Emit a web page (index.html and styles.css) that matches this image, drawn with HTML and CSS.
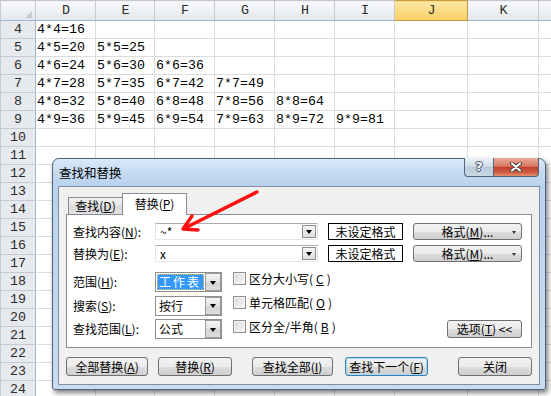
FILE: index.html
```html
<!DOCTYPE html>
<html lang="zh-CN">

<head>
  <meta charset="utf-8">
  <title>查找和替换</title>
  <link rel="stylesheet" href="styles.css">
</head>

<body>
  <table class="sheet">
    <colgroup>
      <col class="w35">
      <col class="w60">
      <col class="w59">
      <col class="w60">
      <col class="w60">
      <col class="w60">
      <col class="w60">
      <col class="w73">
      <col class="w71">
      <col class="w13">
    </colgroup>
    <thead>
      <tr>
        <th class="corner"><svg width="7" height="7" viewBox="0 0 7 7"><path d="M7 0 L7 7 L0 7 Z" fill="#c3c9d1"/></svg></th>
        <th>D</th><th>E</th><th>F</th><th>G</th><th>H</th><th>I</th><th class="sel">J</th><th>K</th><th></th>
      </tr>
    </thead>
    <tbody>
      <tr><th>4</th><td>4*4=16</td><td></td><td></td><td></td><td></td><td></td><td></td><td></td><td></td></tr>
      <tr><th>5</th><td>4*5=20</td><td>5*5=25</td><td></td><td></td><td></td><td></td><td></td><td></td><td></td></tr>
      <tr><th>6</th><td>4*6=24</td><td>5*6=30</td><td>6*6=36</td><td></td><td></td><td></td><td></td><td></td><td></td></tr>
      <tr><th>7</th><td>4*7=28</td><td>5*7=35</td><td>6*7=42</td><td>7*7=49</td><td></td><td></td><td></td><td></td><td></td></tr>
      <tr><th>8</th><td>4*8=32</td><td>5*8=40</td><td>6*8=48</td><td>7*8=56</td><td>8*8=64</td><td></td><td></td><td></td><td></td></tr>
      <tr><th>9</th><td>4*9=36</td><td>5*9=45</td><td>6*9=54</td><td>7*9=63</td><td>8*9=72</td><td>9*9=81</td><td></td><td></td><td></td></tr>
      <tr><th>10</th><td></td><td></td><td></td><td></td><td></td><td></td><td></td><td></td><td></td></tr>
      <tr><th>11</th><td></td><td></td><td></td><td></td><td></td><td></td><td></td><td></td><td></td></tr>
      <tr><th>12</th><td></td><td></td><td></td><td></td><td></td><td></td><td></td><td></td><td></td></tr>
      <tr><th>13</th><td></td><td></td><td></td><td></td><td></td><td></td><td></td><td></td><td></td></tr>
      <tr><th>14</th><td></td><td></td><td></td><td></td><td></td><td></td><td></td><td></td><td></td></tr>
      <tr><th>15</th><td></td><td></td><td></td><td></td><td></td><td></td><td></td><td></td><td></td></tr>
      <tr><th>16</th><td></td><td></td><td></td><td></td><td></td><td></td><td></td><td></td><td></td></tr>
      <tr><th>17</th><td></td><td></td><td></td><td></td><td></td><td></td><td></td><td></td><td></td></tr>
      <tr><th>18</th><td></td><td></td><td></td><td></td><td></td><td></td><td></td><td></td><td></td></tr>
      <tr><th>19</th><td></td><td></td><td></td><td></td><td></td><td></td><td></td><td></td><td></td></tr>
      <tr><th>20</th><td></td><td></td><td></td><td></td><td></td><td></td><td></td><td></td><td></td></tr>
      <tr><th>21</th><td></td><td></td><td></td><td></td><td></td><td></td><td></td><td></td><td></td></tr>
      <tr><th>22</th><td></td><td></td><td></td><td></td><td></td><td></td><td></td><td></td><td></td></tr>
      <tr><th>23</th><td></td><td></td><td></td><td></td><td></td><td></td><td></td><td></td><td></td></tr>
      <tr><th>24</th><td></td><td></td><td></td><td></td><td></td><td></td><td></td><td></td><td></td></tr>
    </tbody>
  </table>

  <div class="dialog">
    <div class="titlebar">
      <span class="title">查找和替换</span>
      <div class="caption-btns">
        <span class="cap-help">?</span>
        <span class="cap-close">
          <svg width="14" height="10" viewBox="0 0 14 10">
            <path d="M3 1.5 L11 8.5 M11 1.5 L3 8.5" stroke="#3b3b3b" stroke-width="4" stroke-linecap="round"/>
            <path d="M3 1.5 L11 8.5 M11 1.5 L3 8.5" stroke="#fff" stroke-width="2.2" stroke-linecap="round"/>
          </svg>
        </span>
      </div>
    </div>

    <div class="client">
      <div class="tabs">
        <span class="tab">查找(<u>D</u>)</span>
        <span class="tab active">替换(<u>P</u>)</span>
      </div>

      <div class="panel">
        <div class="field-row">
          <label class="field-label">查找内容(<u>N</u>):</label>
          <div class="combo"><span class="combo-text">~*</span><span class="drop"></span></div>
          <span class="fmt-box">未设定格式</span>
          <span class="btn fmt-btn">格式(<u>M</u>)...</span>
        </div>
        <div class="field-row">
          <label class="field-label">替换为(<u>E</u>):</label>
          <div class="combo"><span class="combo-text">x</span><span class="drop"></span></div>
          <span class="fmt-box">未设定格式</span>
          <span class="btn fmt-btn">格式(<u>M</u>)...</span>
        </div>

        <div class="options">
          <div class="opt-selects">
            <div class="opt-row">
              <label class="field-label">范围(<u>H</u>):</label>
              <div class="select"><span class="select-text picked">工作表</span><span class="drop big"></span></div>
            </div>
            <div class="opt-row">
              <label class="field-label">搜索(<u>S</u>):</label>
              <div class="select"><span class="select-text">按行</span><span class="drop big"></span></div>
            </div>
            <div class="opt-row">
              <label class="field-label">查找范围(<u>L</u>):</label>
              <div class="select"><span class="select-text">公式</span><span class="drop big"></span></div>
            </div>
          </div>
          <div class="opt-checks">
            <label class="check"><span class="box"></span>区分大小写(<u>C</u>)</label>
            <label class="check"><span class="box"></span>单元格匹配(<u>O</u>)</label>
            <label class="check"><span class="box"></span>区分全/半角(<u>B</u>)</label>
          </div>
          <span class="btn opt-btn">选项(<u>T</u>) &lt;&lt;</span>
        </div>
      </div>

      <div class="actions">
        <span class="btn b-all">全部替换(<u>A</u>)</span>
        <span class="btn b-replace">替换(<u>R</u>)</span>
        <span class="btn b-findall">查找全部(<u>I</u>)</span>
        <span class="btn b-next default">查找下一个(<u>F</u>)</span>
        <span class="btn b-close">关闭</span>
      </div>
    </div>
  </div>

  <svg class="arrow" width="551" height="396" viewBox="0 0 551 396">
    <g stroke="#ff1010" stroke-width="3.4" stroke-linecap="round" stroke-linejoin="round" fill="none">
      <path d="M257 192 L185 228"/>
      <path d="M192 216 L183 229 L198 230"/>
    </g>
  </svg>
</body>

</html>
```

FILE: styles.css
```css
body {
  margin: 0;
  width: 551px;
  height: 396px;
  overflow: hidden;
  position: relative;
  background-color: #fff;
  font-family: "Liberation Mono", monospace;
}

/* spreadsheet */

.sheet {
  border-collapse: collapse;
  table-layout: fixed;
  width: 551px;
  font-size: 13.3px;
  color: #000;
}

.w13 { width: 13px; }
.w35 { width: 35px; }
.w59 { width: 59px; }
.w60 { width: 60px; }
.w71 { width: 71px; }
.w73 { width: 73px; }

.sheet tr {
  height: 18px;
}

.sheet thead tr {
  height: 20px;
}

.sheet td,
.sheet th {
  border: 1px solid #dadcdd;
  padding: 0 0 0 1px;
  white-space: nowrap;
  overflow: hidden;
  text-align: left;
  font-weight: normal;
  line-height: 16px;
}

.sheet thead th {
  background: linear-gradient(#f9fafb, #e3e6ea);
  border-color: #c6cad0;
  border-bottom-color: #9eb6ce;
  text-align: center;
  color: #2b2b2b;
}

.sheet thead th.sel {
  background: linear-gradient(#fde8a6, #f8cf64);
  border-color: #c69a3f;
  color: #2b2b2b;
}

.sheet .corner {
  text-align: right;
  vertical-align: bottom;
  padding: 0 3px 2px 0;
}

.corner svg {
  display: block;
  margin-left: auto;
}

.sheet tbody th {
  background: #e6e9ee;
  border-color: #c6cad0;
  border-right-color: #9eb6ce;
  text-align: center;
  color: #2b2b2b;
  padding: 0;
}

/* dialog */

.dialog {
  position: absolute;
  left: 52px;
  top: 158px;
  width: 494px;
  height: 232px;
  box-sizing: border-box;
  border: 1px solid #51627a;
  border-radius: 7px 7px 3px 3px;
  background: linear-gradient(#dbe9f8 0, #c4daf1 14px, #b9d2ed 27px, #cadcf0 100%);
  box-shadow: 2px 3px 5px rgba(0, 0, 0, 0.5);
  font-family: "Noto Sans CJK SC", sans-serif;
  font-size: 12px;
  line-height: 14px;
  color: #000;
}

.dialog u {
  text-decoration: underline;
}

.titlebar {
  height: 27px;
  display: flex;
  align-items: flex-start;
}

.title {
  padding: 7px 0 0 6px;
  font-size: 12.5px;
}

.caption-btns {
  margin: -1px 6px 0 auto;
  display: flex;
}

.cap-help,
.cap-close {
  height: 19px;
  box-sizing: border-box;
  border: 1px solid #4f6580;
  border-top: none;
  display: flex;
  align-items: center;
  justify-content: center;
}

.cap-help {
  width: 29px;
  border-right: none;
  border-radius: 0 0 0 4px;
  background: linear-gradient(#eaf0f7, #d3deea 45%, #bccbdc 50%, #c9d7e6);
  font-family: "DejaVu Sans", sans-serif;
  font-weight: bold;
  font-size: 13px;
  color: #f7f9fb;
  text-shadow: 1px 0 0 #3d4c60, -1px 0 0 #3d4c60, 0 1px 0 #3d4c60, 0 -1px 0 #3d4c60;
}

.cap-close {
  width: 46px;
  border-radius: 0 0 4px 0;
  background: linear-gradient(#eaa898, #d97a66 45%, #c5412d 52%, #cf5a43 80%, #e3906f);
}

.client {
  margin: 0 5px;
  height: 199px;
  box-sizing: border-box;
  border: 1px solid #7f8ea3;
  background-color: #f0f0f0;
}

.tabs {
  height: 21px;
  padding: 6px 0 0 9px;
  display: flex;
  align-items: flex-end;
}

.tab {
  width: 55px;
  height: 17px;
  box-sizing: border-box;
  border: 1px solid #898c95;
  border-bottom: none;
  background: linear-gradient(#f3f3f3, #e3e3e3 50%, #d9d9d9 50%, #e4e4e4);
  display: flex;
  align-items: center;
  justify-content: center;
}

.tab.active {
  width: 65px;
  height: 22px;
  margin: 0 0 -1px -1px;
  background: #fff;
  position: relative;
  padding-bottom: 2px;
}

.panel {
  width: 466px;
  height: 134px;
  margin-left: 7px;
  box-sizing: border-box;
  border: 1px solid #898c95;
  background-color: #fff;
  padding: 8px 0 0 6px;
}

.field-row {
  display: flex;
  align-items: center;
  height: 17px;
}

.field-row + .field-row {
  margin-top: 5px;
}

.field-label {
  width: 82px;
  flex: none;
}

.combo {
  width: 163px;
  height: 17px;
  box-sizing: border-box;
  border: 1px solid #abadb3;
  border-color: #abadb3 #dbdfe6 #e3e9ef #e2e3ea;
  display: flex;
  align-items: center;
}

.combo-text {
  padding-left: 4px;
  flex: 1;
}

.drop {
  width: 14px;
  height: 13px;
  margin-right: 1px;
  box-sizing: border-box;
  border: 1px solid #8d8d8d;
  background: linear-gradient(#f6f6f6, #dedede);
  display: flex;
  align-items: center;
  justify-content: center;
}

.drop::before {
  content: "";
  border-top: 4px solid #000;
  border-left: 3.5px solid transparent;
  border-right: 3.5px solid transparent;
  margin-top: 1px;
}

.drop.big {
  width: 16px;
  height: 18px;
  margin-right: 0;
  border-color: #9a9a9a;
  background: linear-gradient(#f4f4f4, #e4e4e4 50%, #d5d5d5 50%, #dcdcdc);
}

.fmt-box {
  width: 75px;
  height: 17px;
  margin-left: 10px;
  box-sizing: border-box;
  border: 1px solid #000;
  display: flex;
  align-items: center;
  justify-content: center;
}

.btn {
  height: 19px;
  box-sizing: border-box;
  border: 1px solid #707070;
  border-radius: 3px;
  background: linear-gradient(#f2f2f2, #ebebeb 50%, #dddddd 50%, #cfcfcf);
  display: flex;
  align-items: center;
  justify-content: center;
  flex: none;
}

.fmt-btn {
  width: 109px;
  height: 17px;
  margin-left: 10px;
  position: relative;
}

.fmt-btn::after {
  content: "";
  position: absolute;
  right: 5px;
  top: 7px;
  border-top: 3px solid #333;
  border-left: 2px solid transparent;
  border-right: 2px solid transparent;
}

.options {
  margin-top: 10px;
  display: flex;
}

.opt-selects {
  display: flex;
  flex-direction: column;
  gap: 3.5px;
}

.opt-row {
  display: flex;
  align-items: center;
  height: 20px;
}

.select {
  width: 67px;
  height: 20px;
  box-sizing: border-box;
  border: 1px solid #8e8f8f;
  display: flex;
  align-items: center;
}

.select-text {
  flex: 1;
  margin: 0 1px;
  padding-left: 2px;
  height: 16px;
  line-height: 16px;
}

.select-text.picked {
  background-color: #3399ff;
  color: #fff;
  outline: 1px dotted #f3c56a;
  outline-offset: -1px;
  letter-spacing: 2px;
}

.opt-checks {
  margin-left: 11px;
  display: flex;
  flex-direction: column;
  gap: 11px;
}

.check {
  display: flex;
  align-items: center;
  height: 13px;
  gap: 3px;
}

.box {
  width: 13px;
  height: 13px;
  box-sizing: border-box;
  border: 1px solid #8e8f8f;
  background: linear-gradient(135deg, #d9d9d9, #f8f8f8);
  box-shadow: inset 0 0 0 1px #f4f4f4;
}

.opt-btn {
  width: 75px;
  height: 18px;
  margin: 0 9px 1px auto;
  align-self: flex-end;
}

.actions {
  display: flex;
  padding: 9px 0 0 7px;
}

.b-all { width: 82px; }
.b-replace { width: 74px; margin-left: 10px; }
.b-findall { width: 81px; margin-left: 20px; }
.b-next { width: 83px; margin-left: 12px; }
.b-close { width: 74px; margin-left: 30px; }

.btn.default {
  border-color: #3c7fb1;
  box-shadow: inset 0 0 0 1px #9fdcf8;
}

.arrow {
  position: absolute;
  left: 0;
  top: 0;
  pointer-events: none;
}
```
